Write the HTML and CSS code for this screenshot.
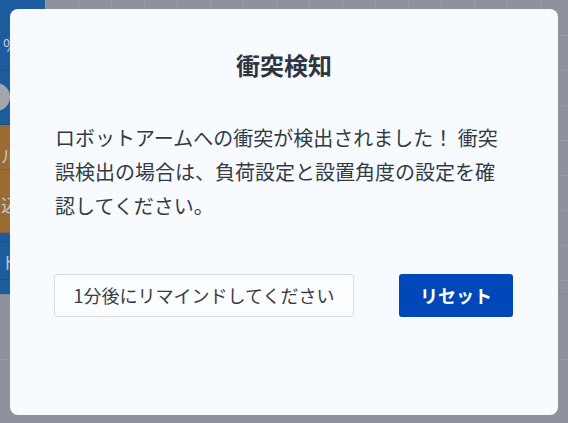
FILE: index.html
```html
<!DOCTYPE html>
<html lang="ja">
<head>
<meta charset="utf-8">
<title>衝突検知</title>
<link rel="stylesheet" href="styles.css">
</head>
<body>
<div class="app">
  <div class="top">
    <aside class="side">
      <div class="row r1"><span class="frag">%</span></div>
      <div class="row r2"><span class="dot"></span></div>
      <div class="row r3 warn"><span class="frag">ル</span></div>
      <div class="row r4 warn"><span class="frag">込</span></div>
      <div class="row r5"></div>
      <div class="row r6"><span class="frag">ト</span></div>
      <div class="row r7"></div>
    </aside>
    <main class="grid"></main>
  </div>
  <div class="bottom"><div class="band"></div></div>
</div>

<div class="overlay">
  <section class="dialog" role="dialog" aria-labelledby="dlg-title">
    <h2 class="dialog-title" id="dlg-title">衝突検知</h2>
    <p class="dialog-body">ロボットアームへの衝突が検出されました！ 衝突誤検出の場合は、負荷設定と設置角度の設定を確認してください。</p>
    <div class="dialog-actions">
      <button class="btn btn-secondary" type="button">1分後にリマインドしてください</button>
      <button class="btn btn-primary" type="button">リセット</button>
    </div>
  </section>
</div>
</body>
</html>
```

FILE: styles.css
```css
* { box-sizing: border-box; }

html, body {
  margin: 0;
  padding: 0;
  width: 568px;
  height: 423px;
  overflow: hidden;
  font-family: "Noto Sans CJK JP", "Noto Sans", sans-serif;
  background: #8e929c;
}

.app {
  display: flex;
  flex-direction: column;
  height: 423px;
}

.top {
  display: flex;
  height: 295px;
  border-bottom: 1px solid #848893;
}

.side {
  width: 45px;
  display: flex;
  flex-direction: column;
  background: #1d5c9e;
  overflow: hidden;
}

.row {
  border-bottom: 1px solid #1a5290;
  position: relative;
  color: #c4cad3;
  font-size: 17px;
  line-height: 1;
}

.r1 { height: 71px; padding: 36px 0 0 3px; }
.r2 { height: 54px; }
.r3 { height: 45px; padding: 22px 0 0 1px; }
.r4 { height: 63px; padding: 26px 0 0 1px; }
.r5 { height: 9px; }
.r6 { height: 38px; padding: 11px 0 0 1px; }
.r7 { flex: 1; border-bottom: none; }

.warn {
  background: #9a6b32;
  border-bottom-color: #8a5f2c;
}

.dot {
  position: absolute;
  left: -18px;
  top: 12px;
  width: 28px;
  height: 28px;
  border-radius: 50%;
  background: #a2a6ae;
}

.grid {
  flex: 1;
  background-color: #8e929c;
  background-image:
    repeating-linear-gradient(to bottom, transparent 0, transparent 34px, #979ba6 34px, #979ba6 35px),
    repeating-linear-gradient(to right, #979ba6 0, #979ba6 1px, transparent 1px, transparent 33px);
  background-position: 0 1px, 0 0;
}

.bottom {
  flex: 1;
  padding-top: 64px;
}

.band {
  height: 1px;
  background: #979ba6;
}

.overlay {
  position: fixed;
  inset: 0;
  display: flex;
  align-items: center;
  justify-content: center;
}

.dialog {
  width: 548px;
  height: 406px;
  padding: 38px 45px 0;
  background: #f7fbff;
  border-radius: 8px;
  display: flex;
  flex-direction: column;
}

.dialog-title {
  margin: 0;
  font-size: 24px;
  line-height: 36px;
  font-weight: 700;
  text-align: center;
  color: #30363f;
}

.dialog-body {
  margin: 38px 0 0;
  font-size: 20px;
  line-height: 34px;
  color: #343a43;
}

.dialog-actions {
  margin-top: 51px;
  margin-left: -1px;
  display: flex;
  justify-content: space-between;
}

.btn {
  height: 43px;
  border-radius: 3px;
  font-family: inherit;
  font-size: 18px;
  line-height: 1;
  cursor: pointer;
}

.btn-secondary {
  width: 300px;
  background: #fbfdff;
  border: 1px solid #d8dde4;
  color: #363b44;
}

.btn-primary {
  width: 114px;
  background: #0048b9;
  border: none;
  color: #ffffff;
  font-weight: 700;
}
```
